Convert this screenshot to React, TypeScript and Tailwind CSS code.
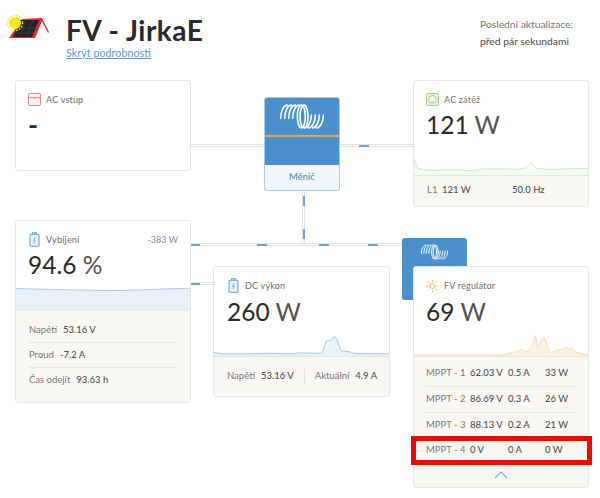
import type { ReactNode } from "react";

const font = { fontFamily: "Lato, 'Open Sans', sans-serif" };

function Coil({ className }: { className: string }) {
  const left = [1, 7, 13, 19];
  const right = [39, 45, 51, 57];
  return (
    <svg viewBox="0 0 66 40" className={className} fill="none" stroke="white" strokeWidth="2.4" strokeLinecap="round">
      {left.map((x) => (
        <path key={x} d={`M${x} 23 C${x} 13 ${x + 4} 3 ${x + 10} 3`} />
      ))}
      <ellipse cx="32" cy="20" rx="6" ry="17" />
      <ellipse cx="36" cy="20" rx="6" ry="17" />
      {right.map((x) => (
        <path key={x} d={`M${x - 2} 37 C${x + 3} 37 ${x + 8} 28 ${x + 8} 18`} />
      ))}
    </svg>
  );
}

function Logo() {
  return (
    <svg viewBox="0 0 44 30" className="absolute left-[7px] top-[13px] h-[30px] w-[44px]">
      <path d="M2 25 L15 6 L35 5 L42 19 L41 20 L35 8 L28 25 Z" fill="#e8262c" />
      <path d="M6 24 L13 7 L32 7 L25 24 Z" fill="#20242c" />
      <path d="M10 15 L28 15 M8 20 L26 20 M19 7 L13 24 M26 7 L19 24" stroke="#3d4350" strokeWidth="0.6" />
      <circle cx="8" cy="10" r="6" fill="#f8e81c" />
      <circle cx="8" cy="10" r="7.5" fill="none" stroke="#f8e81c" strokeWidth="1.6" strokeDasharray="1.5 1.5" />
    </svg>
  );
}

function BatteryIcon() {
  return (
    <svg viewBox="0 0 14 20" className="h-[15px] w-[11px]" fill="none" stroke="#5f9fd6" strokeWidth="1.4">
      <path d="M4.5 2.5 V1 H9.5 V2.5" />
      <rect x="1" y="3" width="12" height="16" rx="1.5" fill="#eaf3fa" />
      <path d="M8 7 L5.5 11 H8 L6 15" strokeWidth="1.1" />
    </svg>
  );
}

function AcInIcon() {
  return (
    <svg viewBox="0 0 14 14" className="h-[13px] w-[13px]" fill="none" stroke="#d9787c" strokeWidth="1">
      <rect x="0.5" y="0.5" width="13" height="13" rx="1.5" fill="#fdf4f4" />
      <path d="M0.5 5 H13.5 M7 5 V6.5" />
    </svg>
  );
}

function LoadIcon() {
  return (
    <svg viewBox="0 0 14 14" className="h-[13px] w-[13px]" fill="none" stroke="#94c77e" strokeWidth="1">
      <rect x="0.5" y="0.5" width="13" height="13" rx="2" fill="#e9f4e2" />
      <circle cx="7" cy="7" r="4.2" fill="white" />
      <path d="M5.5 6 V7 M8.5 6 V7 M5.5 9.2 H8.5" />
    </svg>
  );
}

function SunIcon() {
  return (
    <svg viewBox="0 0 16 16" className="h-[14px] w-[14px]" fill="none" stroke="#eda95c" strokeWidth="1" strokeLinecap="round">
      <circle cx="8" cy="8" r="3.2" />
      <path d="M8 0.8 V2.4 M8 13.6 V15.2 M0.8 8 H2.4 M13.6 8 H15.2 M2.9 2.9 L4 4 M12 12 L13.1 13.1 M2.9 13.1 L4 12 M12 4 L13.1 2.9" />
    </svg>
  );
}

function Spark({ path, stroke, fill, className }: { path: string; stroke: string; fill: string; className: string }) {
  return (
    <svg viewBox="0 0 175 40" preserveAspectRatio="none" className={className}>
      <path d={`${path} L175 40 L0 40 Z`} fill={fill} />
      <path d={path} fill="none" stroke={stroke} strokeWidth="1" vectorEffect="non-scaling-stroke" />
    </svg>
  );
}

function Card({
  x,
  y,
  w,
  h,
  children,
}: {
  x: string;
  y: string;
  w: string;
  h: string;
  children: ReactNode;
}) {
  return (
    <div className={`absolute ${x} ${y} ${w} ${h} flex flex-col overflow-hidden rounded-[3px] border border-[#e6e6e3] bg-white`}>
      {children}
    </div>
  );
}

function Head({ icon, label, right }: { icon: ReactNode; label: string; right?: string }) {
  return (
    <div className="flex h-[15px] items-center justify-between">
      <div className="flex items-center gap-[5px]">
        <span className="flex w-[13px] justify-center">{icon}</span>
        <span className="text-[9px] leading-none tracking-[0.2px] text-[#6f6f6d]">{label}</span>
      </div>
      {right && <span className="text-[9px] leading-none text-[#8c8c8a]">{right}</span>}
    </div>
  );
}

function Big({ value, unit, low }: { value: string; unit: string; low?: boolean }) {
  return (
    <div className={`${low ? "mt-[2px]" : "mt-[1px]"} text-[24.5px] leading-[34px] text-[#2b2a29]`}>
      {value} <span className="text-[#55534f]">{unit}</span>
    </div>
  );
}

function Row({ label, value, last }: { label: string; value: string; last?: boolean }) {
  return (
    <div className={`flex h-[25px] items-center gap-[6px] text-[9.5px] ${last ? "" : "border-b border-[#e6e5e0]"}`}>
      <span className="text-[#7a7976]">{label}</span>
      <span className="font-medium text-[#55534f]">{value}</span>
    </div>
  );
}

function Mppt({ n, v, a, w }: { n: string; v: string; a: string; w: string }) {
  return (
    <div className="flex h-[25px] items-center text-[9.5px]">
      <span className="w-[44px] text-[#7a7976]">{n}</span>
      <span className="w-[38px] font-medium text-[#55534f]">{v}</span>
      <span className="w-[37px] font-medium text-[#55534f]">{a}</span>
      <span className="font-medium text-[#55534f]">{w}</span>
    </div>
  );
}

function Wire({ className }: { className: string }) {
  return <div className={`absolute border-[#e4e3df] ${className}`} />;
}

function Dash({ className }: { className: string }) {
  return <div className={`absolute bg-[#4a90cd] opacity-80 ${className}`} />;
}

export default function App() {
  return (
    <div className="relative h-[498px] w-[600px] overflow-hidden bg-white" style={font}>
      <Logo />
      <div className="absolute left-[66px] top-[13px]">
        <h1 className="text-[28px] font-bold leading-[34px] tracking-[0.5px] text-[#2b2a29]">FV - JirkaE</h1>
        <a className="block text-[10.8px] leading-[12px] text-[#5b9bd0] underline">Skrýt podrobnosti</a>
      </div>
      <div className="absolute left-[480px] top-[16px] text-[10.3px] leading-[17px] text-[#7a7976]">
        <div>Poslední aktualizace:</div>
        <div className="font-medium text-[#55534f]">před pár sekundami</div>
      </div>

      {/* wires */}
      <Wire className="left-[190px] top-[144px] h-[3px] w-[224px] border-y" />
      <Wire className="left-[302px] top-[190px] h-[54px] w-[3px] border-x" />
      <Wire className="left-[190px] top-[243px] h-[3px] w-[213px] border-y" />
      <Wire className="left-[190px] top-[282px] h-[3px] w-[24px] border-y" />
      <Dash className="left-[359px] top-[145px] h-[1.5px] w-[10px]" />
      <Dash className="left-[191px] top-[244px] h-[1.5px] w-[9px]" />
      <Dash className="left-[257px] top-[244px] h-[1.5px] w-[10px]" />
      <Dash className="left-[319px] top-[244px] h-[1.5px] w-[10px]" />
      <Dash className="left-[368px] top-[244px] h-[1.5px] w-[10px]" />
      <Dash className="left-[191px] top-[283px] h-[1.5px] w-[9px]" />
      <Dash className="left-[303px] top-[196px] h-[10px] w-[1.5px]" />
      <Dash className="left-[303px] top-[229px] h-[10px] w-[1.5px]" />

      {/* Měnič */}
      <div className="absolute left-[264px] top-[97px] flex h-[94px] w-[76px] flex-col overflow-hidden rounded-[3px] border border-[#a9cbe6] bg-[#4a90cd]">
        <div className="flex h-[37px] items-center justify-center">
          <Coil className="h-[27px] w-[44px]" />
        </div>
        <div className="h-[2px] bg-[#e8a44f]" />
        <div className="flex-1" />
        <div className="flex h-[25px] items-center justify-center bg-[#f0f6fb] text-[9.5px] text-[#4a82b8]">Měnič</div>
      </div>

      {/* solar charger box behind the card */}
      <div className="absolute left-[402px] top-[238px] flex h-[62px] w-[65px] justify-center rounded-[3px] bg-[#4a90cd] pt-[5px]">
        <Coil className="h-[18px] w-[27px]" />
      </div>

      <Card x="left-[15px]" y="top-[80px]" w="w-[176px]" h="h-[91px]">
        <div className="px-[12px] pt-[11px]">
          <Head icon={<AcInIcon />} label="AC vstup" />
          <div className="mt-[6px] text-[27px] font-bold leading-[24px] text-[#2b2a29]">-</div>
        </div>
      </Card>

      <Card x="left-[413px]" y="top-[80px]" w="w-[176px]" h="h-[127px]">
        <div className="px-[12px] pt-[11px]">
          <Head icon={<LoadIcon />} label="AC zátěž" />
          <Big value="121" unit="W" />
        </div>
        <div className="flex-1" />
        <Spark
          className="h-[19px] w-full"
          stroke="#cfe6c2"
          fill="#f5faf2"
          path="M0 5 L3 25 L12 30 L25 30 L40 29 L60 31 L70 27 L90 27 L105 28 L112 25 L118 14 L123 26 L140 29 L150 27 L175 26"
        />
        <div className="flex h-[31px] items-center border-t border-[#e6e5e0] bg-[#f8f7f3] px-[13px] pb-[2px] text-[9.5px]">
          <span className="w-[15px] text-[#7a7976]">L1</span>
          <span className="w-[70px] font-medium text-[#55534f]">121 W</span>
          <span className="font-medium text-[#55534f]">50.0 Hz</span>
        </div>
      </Card>

      <Card x="left-[15px]" y="top-[220px]" w="w-[176px]" h="h-[183px]">
        <div className="px-[12px] pt-[11px]">
          <Head icon={<BatteryIcon />} label="Vybíjení" right="-383 W" />
          <Big value="94.6" unit="%" />
        </div>
        <div className="flex-1" />
        <Spark
          className="h-[21px] w-full"
          stroke="#a9cbe6"
          fill="#eaf2f9"
          path="M0 1 L40 3 L100 5 L135 3 L175 0"
        />
        <div className="h-[93px] border-t border-[#e6e5e0] bg-[#f8f7f3] px-[13px] pt-[8px]">
          <Row label="Napětí" value="53.16 V" />
          <Row label="Proud" value="-7.2 A" />
          <Row label="Čas odejít" value="93.63 h" last />
        </div>
      </Card>

      <Card x="left-[213px]" y="top-[266px]" w="w-[177px]" h="h-[131px]">
        <div className="px-[13px] pt-[11px]">
          <Head icon={<BatteryIcon />} label="DC výkon" />
          <Big value="260" unit="W" low />
        </div>
        <div className="flex-1" />
        <Spark
          className="h-[21px] w-full"
          stroke="#a9cbe6"
          fill="#eaf2f9"
          path="M0 33 L8 36 L30 36 L55 35 L80 36 L85 34 L108 35 L112 12 L118 9 L120 3 L123 8 L127 30 L135 32 L140 35 L175 36"
        />
        <div className="flex h-[40px] items-center whitespace-nowrap border-t border-[#e6e5e0] bg-[#f8f7f3] pl-[13px] text-[9.5px]">
          <span className="text-[#7a7976]">Napětí</span>
          <span className="ml-[6px] font-medium text-[#55534f]">53.16 V</span>
          <span className="mx-[10px] h-[15px] w-px shrink-0 bg-[#e0dfda]" />
          <span className="text-[#7a7976]">Aktuální</span>
          <span className="ml-[6px] font-medium text-[#55534f]">4.9 A</span>
        </div>
      </Card>

      <Card x="left-[413px]" y="top-[266px]" w="w-[176px]" h="h-[222px]">
        <div className="px-[12px] pt-[11px]">
          <Head icon={<SunIcon />} label="FV regulátor" />
          <Big value="69" unit="W" low />
        </div>
        <div className="flex-1" />
        <Spark
          className="h-[22px] w-full"
          stroke="#f6ddb9"
          fill="#fbf1e2"
          path="M0 38 L90 38 L100 33 L106 30 L109 28 L113 32 L118 25 L122 3 L125 25 L128 10 L131 6 L134 20 L137 34 L143 30 L150 27 L153 24 L156 28 L158 25 L163 33 L175 38"
        />
        <div className="h-[131px] border-t border-[#e6e5e0] bg-[#f8f7f3] px-[12px] pt-[4px]">
          <div className="border-b border-[#e6e5e0]">
            <Mppt n="MPPT - 1" v="62.03 V" a="0.5 A" w="33 W" />
          </div>
          <div className="border-b border-[#e6e5e0]">
            <Mppt n="MPPT - 2" v="86.69 V" a="0.3 A" w="26 W" />
          </div>
          <Mppt n="MPPT - 3" v="88.13 V" a="0.2 A" w="21 W" />
          <Mppt n="MPPT - 4" v="0 V" a="0 A" w="0 W" />
          <div className="mt-[8px] flex justify-center">
            <svg viewBox="0 0 14 8" className="h-[8px] w-[14px]" fill="none" stroke="#7fa8d0" strokeWidth="1.2">
              <path d="M1 7 L7 1 L13 7" />
            </svg>
          </div>
        </div>
      </Card>

      {/* highlight drawn over the card */}
      <div className="absolute left-[411px] top-[436px] h-[29px] w-[181px] border-[5px] border-[#ff0000]" />
    </div>
  );
}
